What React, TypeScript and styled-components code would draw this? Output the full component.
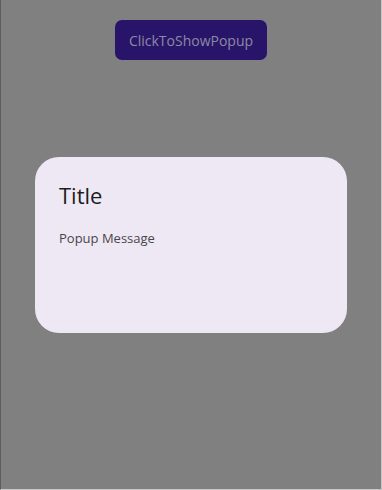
import React from "react";
import styled, { createGlobalStyle } from "styled-components";

const Global = createGlobalStyle`
  html, body {
    margin: 0;
    padding: 0;
    background: #808080;
  }
  body {
    font-family: "Open Sans", "Noto Sans", sans-serif;
  }
`;

const Page = styled.div`
  box-sizing: border-box;
  width: 382px;
  height: 490px;
  background: #808080;
  border-left: 1px solid #5e5e5e;
  border-right: 1px solid #c8c8c8;
  border-bottom: 1px solid #c8c8c8;
  display: flex;
  flex-direction: column;
  align-items: center;
  padding-top: 20px;
`;

const ShowButton = styled.button`
  height: 40px;
  padding: 0 14px;
  border: none;
  border-radius: 7px;
  background: #28156a;
  color: #8c8aa0;
  font-family: "Open Sans", "Noto Sans", sans-serif;
  font-size: 14px;
  cursor: pointer;
`;

const Popup = styled.div`
  box-sizing: border-box;
  width: 312px;
  height: 176px;
  margin-top: 97px;
  padding: 22px 24px;
  border-radius: 24px;
  background: #eee8f4;
`;

const Title = styled.h2`
  margin: 0;
  font-size: 22px;
  font-weight: 400;
  line-height: 32px;
  color: #1c1b1f;
`;

const Message = styled.p`
  margin: 17px 0 0;
  font-size: 13px;
  line-height: 20px;
  color: #49454f;
`;

export default function App() {
  return (
    <>
      <Global />
      <Page>
        <ShowButton>ClickToShowPopup</ShowButton>
        <Popup>
          <Title>Title</Title>
          <Message>Popup Message</Message>
        </Popup>
      </Page>
    </>
  );
}
